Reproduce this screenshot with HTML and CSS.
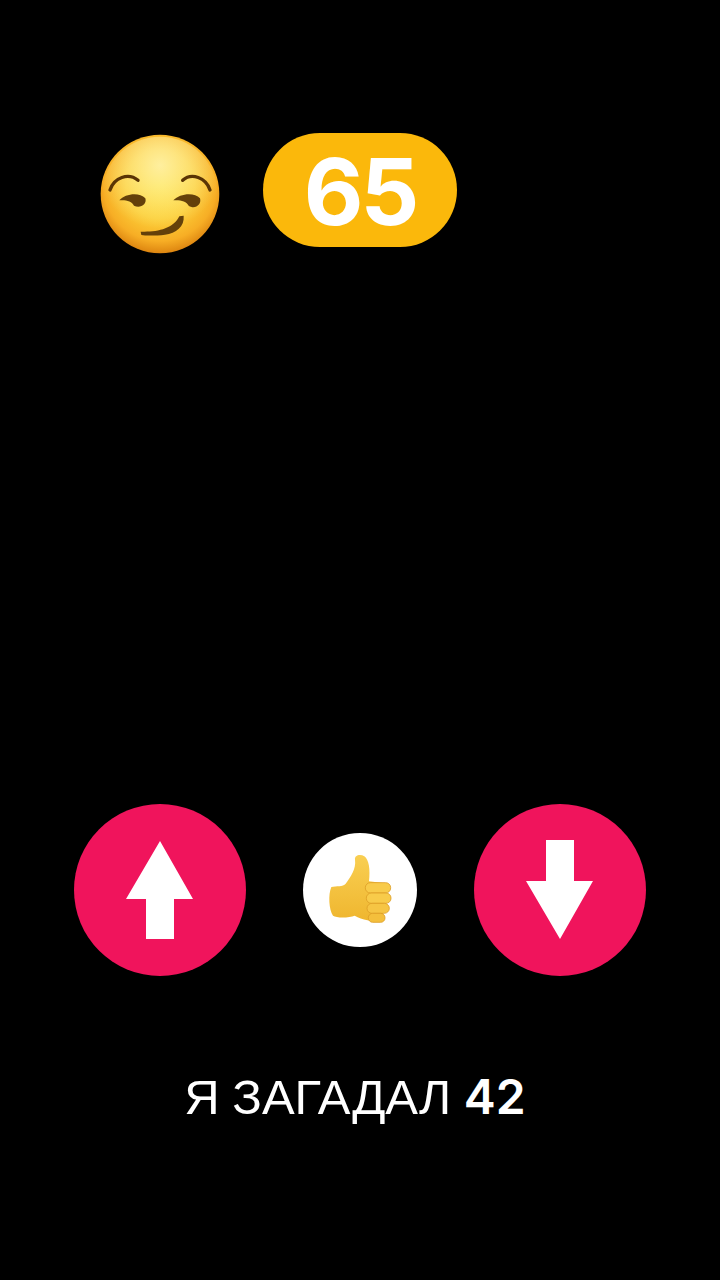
FILE: index.html
```html
<html><head><title>Я загадал 42</title>
<link rel="stylesheet" href="styles.css">
</head>
<body>
<div class="game">
  <div class="top-row">
    <svg class="smirk" viewBox="30 0 360 390">
      <defs>
        <radialGradient id="face" cx="50%" cy="42%" r="58%">
          <stop offset="0" stop-color="#fde23a"/>
          <stop offset="0.5" stop-color="#fccf38"/>
          <stop offset="0.82" stop-color="#f7ae25"/>
          <stop offset="1" stop-color="#dd8510"/>
        </radialGradient>
        <radialGradient id="shine" cx="50%" cy="25%" r="55%">
          <stop offset="0" stop-color="#fff3b0" stop-opacity="0.85"/>
          <stop offset="1" stop-color="#fff3b0" stop-opacity="0"/>
        </radialGradient>
      </defs>
      <circle cx="210" cy="207" r="178" fill="url(#face)"/>
      <circle cx="210" cy="207" r="172" fill="url(#shine)"/>
      <path d="M60 195 C72 158 115 142 144 166" fill="none" stroke="#5a3405" stroke-width="10" stroke-linecap="round"/>
      <path d="M360 195 C348 158 305 142 278 166" fill="none" stroke="#5a3405" stroke-width="10" stroke-linecap="round"/>
      <path d="M88 226 C105 206 148 200 166 220 C172 238 150 252 132 242 C126 228 106 224 88 226 Z" fill="#64400a"/>
      <path d="M250 226 C270 204 314 201 330 220 C336 240 314 254 296 242 C290 228 268 224 250 226 Z" fill="#64400a"/>
      <path d="M152 320 C200 322 250 312 268 274 L281 272 C284 305 258 324 225 329 C200 332 170 333 154 330 Z" fill="#64400a"/>
    </svg>
    <div class="score">65</div>
  </div>

  <div class="controls">
    <button class="round-btn">
      <svg class="arrow" viewBox="0 0 172 172"><path d="M86 37 L119 95 L100 95 L100 135 L72 135 L72 95 L52 95 Z" fill="#fff"/></svg>
    </button>
    <button class="like-btn">
      <svg class="thumb" viewBox="10 10 342 342">
        <defs>
          <linearGradient id="skin" x1="0" y1="0" x2="0" y2="1">
            <stop offset="0" stop-color="#f9cf52"/>
            <stop offset="1" stop-color="#efb62f"/>
          </linearGradient>
        </defs>
        <path d="M166 90 C164 76 182 72 194 80 C208 90 212 120 208 155 L250 160 L250 275 C225 276 190 272 165 258 C150 264 112 266 100 258 C88 240 85 195 95 172 C110 168 130 172 138 162 C152 142 170 118 166 90 Z" fill="url(#skin)"/>
        <rect x="197" y="159" width="76" height="31" rx="15" fill="#f8cb4a" stroke="#dd9f26" stroke-width="2.5"/>
        <rect x="200" y="190" width="74" height="31" rx="15" fill="#f8cb4a" stroke="#dd9f26" stroke-width="2.5"/>
        <rect x="202" y="221" width="67" height="30" rx="15" fill="#f6c544" stroke="#dd9f26" stroke-width="2.5"/>
        <rect x="206" y="251" width="50" height="27" rx="13" fill="#f4bf3c" stroke="#dd9f26" stroke-width="2.5"/>
      </svg>
    </button>
    <button class="round-btn">
      <svg class="arrow" viewBox="0 0 172 172"><path d="M72 36 L100 36 L100 77 L119 77 L86 135 L52 77 L72 77 Z" fill="#fff"/></svg>
    </button>
  </div>

  <div class="message">Я ЗАГАДАЛ <b>42</b></div>
</div>
</body></html>
```

FILE: styles.css
```css
body {
  background-color: #000;
  color: #fff;
  font-family: 'Liberation Sans', Arial, sans-serif;
  margin: 0;
  padding: 0;
  overflow: hidden;
}
.game {
  width: 720px;
  height: 1280px;
  padding: 125px 60px 0;
  box-sizing: border-box;
}
.top-row,
.controls {
  display: grid;
  grid-template-columns: repeat(3, 200px);
  justify-items: center;
  align-items: center;
}
.smirk {
  width: 120px;
  height: 130px;
}
.score {
  width: 194px;
  height: 114px;
  box-sizing: border-box;
  padding-top: 3px;
  border-radius: 57px;
  background: #fbb80b;
  font-family: 'Inter', sans-serif;
  font-size: 92px;
  font-weight: 700;
  letter-spacing: -3px;
  line-height: 111px;
  text-align: center;
}
.controls {
  margin-top: 549px;
}
.round-btn,
.like-btn {
  border: none;
  padding: 0;
  border-radius: 50%;
  display: flex;
  justify-content: center;
  align-items: center;
}
.round-btn {
  width: 172px;
  height: 172px;
  background: #f0145c;
}
.like-btn {
  width: 114px;
  height: 114px;
  background: #fff;
}
.arrow {
  width: 172px;
  height: 172px;
}
.thumb {
  width: 114px;
  height: 114px;
}
.message {
  margin-top: 93px;
  padding-right: 10px;
  font-size: 49px;
  word-spacing: -1px;
  line-height: 56px;
  text-align: center;
}
.message b {
  font-family: 'Inter', sans-serif;
  font-size: 48px;
  font-weight: 600;
}
```
